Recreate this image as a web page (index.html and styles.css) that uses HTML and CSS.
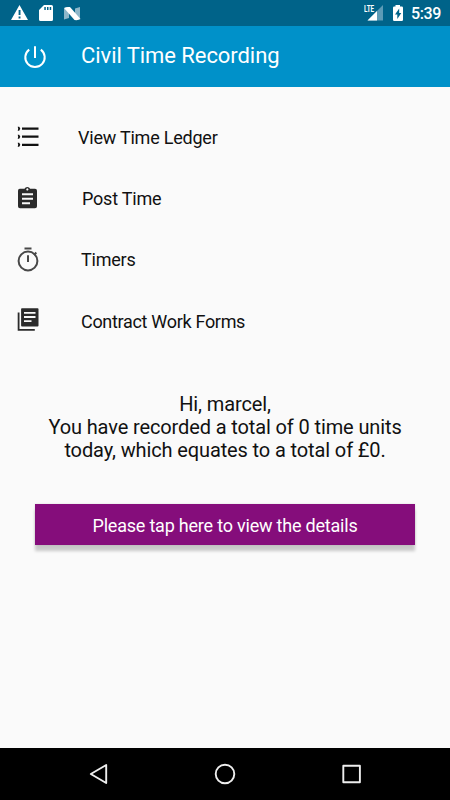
FILE: index.html
```html
<!DOCTYPE html>
<html lang="en">
<head>
<meta charset="utf-8">
<title>Civil Time Recording</title>
<link rel="stylesheet" href="styles.css">
</head>
<body>
<div class="screen">
  <div class="status">
    <svg class="notifications" width="90" height="26" viewBox="0 0 90 26">
      <path fill="#fff" fill-rule="evenodd" d="M19.500 5 28 20H11ZM18.600 10v5h1.900v-5Zm0 6.500v2h1.900v-2Z"/>
      <path fill="#fff" fill-rule="evenodd" d="M44 5h7.500q1.500 0 1.500 1.500v13q0 1.500-1.500 1.500h-11q-1.500 0-1.500-1.500V10ZM44.300 7v3h1.500V7Zm2.700 0v3h1.500V7Zm2.700 0v3h1.500V7Z"/>
      <path fill="#8db7ca" d="M64 8.500 69 7v11l-5 1.500ZM75 8.500 80 7v11l-5 1.500Z"/>
      <path fill="#fff" d="M64 8q2-1.500 6-1l10.500 12q-2 1.500-6 1Z"/>
    </svg>
    <div class="indicators">
      <div class="signal">
        <svg width="22" height="26" viewBox="0 0 22 26">
          <path fill="#5d9bb6" d="M21 5v15.500H5.500Z"/>
          <path fill="#fff" d="M15 11v9.500H5.500Z"/>
        </svg>
        <span class="lte">LTE</span>
      </div>
      <svg width="12" height="26" viewBox="0 0 12 26">
        <path fill="#fff" fill-rule="evenodd" d="M3.500 5H8v1.500h1.800q1.200 0 1.200 1.200v12q0 1.300-1.200 1.300H2.200Q1 21 1 19.700v-12q0-1.200 1.200-1.200h1.300ZM7.200 8.500 3 14.500h2.300v4.500L9.300 13H7.200Z"/>
      </svg>
      <span class="clock">5:39</span>
    </div>
  </div>
  <header class="appbar">
    <svg width="28" height="28" viewBox="0 0 28 28" fill="none" stroke="#fff" stroke-width="2">
      <path d="M14 3.200V15M8.200 6.600a9.700 9.700 0 1 0 11.600 0"/>
    </svg>
    <h1 class="title">Civil Time Recording</h1>
  </header>
  <nav class="menu">
    <a class="row ledger">
      <svg width="28" height="32" viewBox="0 0 28 32">
        <path fill="#111" d="M8 5.500h16.500v2.200H8Zm0 8.100h16.500v2.200H8Zm0 8.100h16.500v2.200H8ZM3.700 4.700h1.500l1.100 1.900-1.100 2.100H3.700l.5-2Zm0 8h1.500l1.100 2-1.100 2H3.700l.5-2Zm0 8.100h1.500l1.100 2-1.100 2H3.700l.5-2Z"/>
      </svg>
      <span>View Time Ledger</span>
    </a>
    <a class="row post">
      <svg width="28" height="32" viewBox="0 0 28 32">
        <path fill="#2b2b2b" fill-rule="evenodd" d="M5.800 5.800H10.500a3 3 0 0 1 5.600 0h4.900q2 0 2 2v15.500q0 2-2 2H6q-2 0-2-2v-15.500q0-2 1.800-2ZM13.300 5.300a1.100 1.100 0 1 0 .1 0ZM8 10.200v2h11v-2Zm0 4.500v2h11v-2Zm0 4.500v2h8v-2Z"/>
      </svg>
      <span>Post Time</span>
    </a>
    <a class="row timers">
      <svg width="28" height="32" viewBox="0 0 28 32">
        <g fill="none" stroke="#484848" stroke-width="2">
          <circle cx="14" cy="17" r="9.400"/>
          <path d="M10.500 4.400h7M14 11.200v6.800M20 11l2.300-2.500"/>
        </g>
      </svg>
      <span>Timers</span>
    </a>
    <a class="row forms">
      <svg width="28" height="32" viewBox="0 0 28 32">
        <path fill="#2b2b2b" fill-rule="evenodd" d="M8 3.200h15.600q.9 0 .9.900v16.400q0 .9-.9.900H8q-.9 0-.9-.9V4.100q0-.9.900-.9ZM10 6.900v1.800h11.500V6.900Zm0 4.200v1.800h11.500v-1.800Zm0 4.200v1.800h7.500v-1.800Z"/>
        <path fill="none" stroke="#2b2b2b" stroke-width="1.800" d="M4.600 7.500v17.300h16.200"/>
      </svg>
      <span>Contract Work Forms</span>
    </a>
  </nav>
  <p class="summary">Hi, marcel,<br>You have recorded a total of 0 time units<br>today, which equates to a total of £0.</p>
  <button class="details">Please tap here to view the details</button>
  <footer class="navbar">
    <svg width="28" height="28" viewBox="0 0 28 28"><path d="M21.200 5v18L5.800 14Z"/></svg>
    <svg width="28" height="28" viewBox="0 0 28 28"><circle cx="14" cy="14" r="9.300"/></svg>
    <svg width="28" height="28" viewBox="0 0 28 28"><path d="M6.300 5.700h16.600v16.600H6.300Z"/></svg>
  </footer>
</div>
</body>
</html>
```

FILE: styles.css
```css
* { box-sizing: border-box; }
body { margin: 0; font-family: Roboto, "Liberation Sans", sans-serif; }
svg { display: block; flex: none; }
.screen {
  width: 450px;
  height: 800px;
  overflow: hidden;
  display: flex;
  flex-direction: column;
  background: #fafafa;
  color: #111;
}
.status {
  height: 26px;
  flex: none;
  display: flex;
  justify-content: space-between;
  background: #006389;
  color: #fff;
}
.indicators { display: flex; padding-right: 9px; }
.signal { position: relative; margin-right: 8px; }
.lte {
  position: absolute;
  left: 2px;
  top: 4px;
  font-size: 9px;
  line-height: 10px;
  font-weight: 700;
  transform: scaleX(0.7);
  transform-origin: left;
}
.clock { margin-left: 7px; font-size: 16px; line-height: 28px; font-weight: 500; letter-spacing: -0.4px; }
.appbar {
  height: 61px;
  flex: none;
  display: flex;
  align-items: center;
  padding-left: 21px;
  background: #0091c9;
  color: #fff;
}
.title {
  margin: 0 0 2px 32px;
  font-size: 22px;
  line-height: 28px;
  font-weight: 400;
  letter-spacing: -0.06px;
  white-space: nowrap;
}
.menu { padding-top: 20px; }
.row {
  display: flex;
  align-items: center;
  height: 61px;
  padding-left: 14px;
  font-size: 18px;
  letter-spacing: -0.22px;
  white-space: nowrap;
}
.row span { margin-left: 39px; }
.ledger span { margin-left: 36px; }
.post span { margin-left: 40px; }
.forms { letter-spacing: -0.31px; }
.forms span { padding-top: 1px; }
.summary {
  margin: 42px 0 0;
  font-size: 20px;
  line-height: 23px;
  letter-spacing: -0.12px;
  text-align: center;
  white-space: nowrap;
}
.details {
  height: 41px;
  margin: 42px 35px 0;
  padding: 2px 0 0;
  border: 0;
  background: #850d7b;
  color: #fff;
  font: 400 18px/39px Roboto, "Liberation Sans", sans-serif;
  letter-spacing: -0.21px;
  box-shadow: 0 6px 3px rgba(0, 0, 0, 0.2), 0 0 2px rgba(0, 0, 0, 0.12);
}
.navbar {
  height: 52px;
  margin-top: auto;
  display: flex;
  justify-content: space-between;
  align-items: center;
  padding: 0 85px;
  background: #000;
}
.navbar svg { fill: none; stroke: #eee; stroke-width: 1.9; stroke-linejoin: round; }
```
